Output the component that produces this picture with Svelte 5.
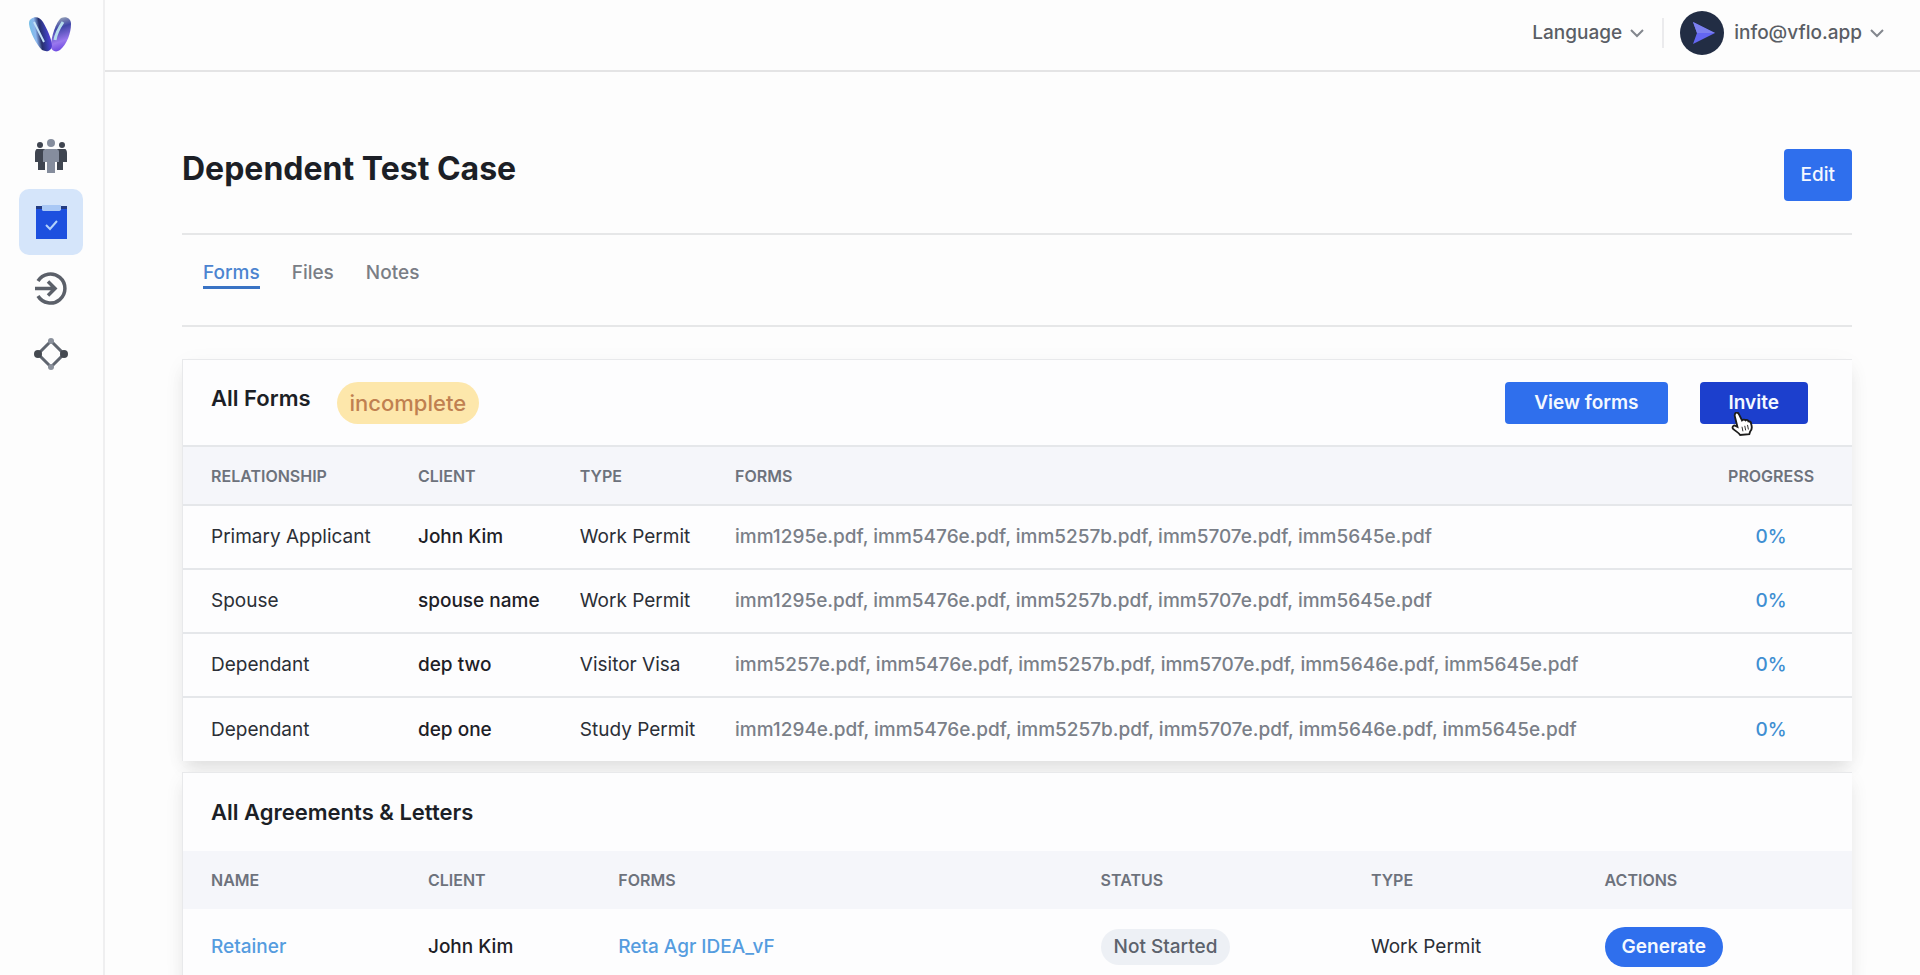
<script lang="ts">
	interface FormRow {
		relationship: string;
		client: string;
		type: string;
		forms: string[];
		progress: number;
	}

	interface Agreement {
		name: string;
		client: string;
		form: string;
		status: string;
		type: string;
	}

	const tabs = ['Forms', 'Files', 'Notes'];
	let activeTab = $state('Forms');

	const forms: FormRow[] = [
		{
			relationship: 'Primary Applicant',
			client: 'John Kim',
			type: 'Work Permit',
			forms: ['imm1295e.pdf', 'imm5476e.pdf', 'imm5257b.pdf', 'imm5707e.pdf', 'imm5645e.pdf'],
			progress: 0
		},
		{
			relationship: 'Spouse',
			client: 'spouse name',
			type: 'Work Permit',
			forms: ['imm1295e.pdf', 'imm5476e.pdf', 'imm5257b.pdf', 'imm5707e.pdf', 'imm5645e.pdf'],
			progress: 0
		},
		{
			relationship: 'Dependant',
			client: 'dep two',
			type: 'Visitor Visa',
			forms: ['imm5257e.pdf', 'imm5476e.pdf', 'imm5257b.pdf', 'imm5707e.pdf', 'imm5646e.pdf', 'imm5645e.pdf'],
			progress: 0
		},
		{
			relationship: 'Dependant',
			client: 'dep one',
			type: 'Study Permit',
			forms: ['imm1294e.pdf', 'imm5476e.pdf', 'imm5257b.pdf', 'imm5707e.pdf', 'imm5646e.pdf', 'imm5645e.pdf'],
			progress: 0
		}
	];

	const agreements: Agreement[] = [
		{
			name: 'Retainer',
			client: 'John Kim',
			form: 'Reta Agr IDEA_vF',
			status: 'Not Started',
			type: 'Work Permit'
		}
	];
</script>

{#snippet chevron()}
	<svg class="chevron" viewBox="0 0 14 10" aria-hidden="true">
		<path d="M1 2l6 6 6-6" fill="none" stroke="currentColor" stroke-width="2" />
	</svg>
{/snippet}

<div class="app">
	<aside class="sidebar">
		<a class="logo" href="#home" aria-label="Home">
			<svg viewBox="0 0 44 38">
				<defs>
					<linearGradient id="logo-left" x1="0" y1="0.6" x2="1" y2="0.4">
						<stop offset="0" stop-color="#6fc3e4" />
						<stop offset="0.3" stop-color="#8db7ee" />
						<stop offset="0.5" stop-color="#27306b" />
						<stop offset="0.75" stop-color="#3b3fb4" />
						<stop offset="1" stop-color="#6a3de8" />
					</linearGradient>
					<linearGradient id="logo-right" x1="0.4" y1="0" x2="0.6" y2="1">
						<stop offset="0" stop-color="#9aa9b8" />
						<stop offset="0.3" stop-color="#4046a8" />
						<stop offset="0.7" stop-color="#9a78ee" />
						<stop offset="1" stop-color="#6440de" />
					</linearGradient>
				</defs>
				<path d="M33 2c5-2 10 0 10 6 0 9-4 20-11 26-4 3-9 1-9-4 0-9 5-24 10-28z" fill="url(#logo-right)" />
				<path d="M3 3c4-3 9-2 12 3 4 7 9 17 9 24-1 6-6 6-10 4C8 28 2 16 1 8c0-2 0-4 2-5z" fill="url(#logo-left)" />
				<path d="M6 6c3 6 6 12 10 20" fill="none" stroke="#c3e3f7" stroke-width="2" />
				<path d="M35 6c-4 6-7 11-8 18" fill="none" stroke="#b5dcec" stroke-width="3" />
			</svg>
		</a>
		<nav class="side-nav">
			<a class="side-link" href="#clients" aria-label="Clients">
				<svg viewBox="0 0 34 34">
					<g fill="#3f4550">
						<circle cx="6" cy="6" r="3" />
						<circle cx="28" cy="6" r="3" />
						<path d="M3 10h8v21H4v-8H1v-9c0-2 1-4 2-4z" />
						<path d="M31 10h-8v21h6v-8h4v-9c0-2-1-4-2-4z" />
					</g>
					<g fill="#858d9d">
						<circle cx="17" cy="4" r="4" />
						<path d="M12 10h10c2 0 3 1 3 3v10h-4v11h-8V23H9V13c0-2 1-3 3-3z" />
					</g>
				</svg>
			</a>
			<a class="side-link active" href="#cases" aria-label="Cases" aria-current="page">
				<svg viewBox="0 0 34 34">
					<path d="M2 1h31v33H2z" fill="#1d50df" />
					<path d="M2 1h6v3H2zM27 1h6v3h-6z" fill="#233b82" />
					<path d="M8 0h19v5c-1 1-2 1-3 1H11c-1 0-3 0-3-1z" fill="#a9c8f5" />
					<path d="M12 20l4 4 7-8" fill="none" stroke="#b3d2fb" stroke-width="2" />
				</svg>
			</a>
			<a class="side-link" href="#intake" aria-label="Intake">
				<svg viewBox="0 0 34 34" fill="none" stroke="#5b6069" stroke-width="3.500">
					<path d="M4 10a14.500 14.500 0 1 1 0 15" />
					<path d="M1 17.500h20M14 10.500l7 7-7 7" />
				</svg>
			</a>
			<a class="side-link" href="#flows" aria-label="Flows">
				<svg viewBox="0 0 34 34">
					<path d="M17 4l13 13-13 13L4 17z" fill="none" stroke="#5f656f" stroke-width="3" />
					<circle cx="17" cy="4" r="3" fill="#8a909b" />
					<circle cx="17" cy="30" r="3" fill="#8a909b" />
					<circle cx="4" cy="17" r="4" fill="#444950" />
					<circle cx="30" cy="17" r="4" fill="#444950" />
				</svg>
			</a>
		</nav>
	</aside>

	<div class="page">
		<header class="topbar">
			<button class="menu" type="button">Language {@render chevron()}</button>
			<span class="divider"></span>
			<button class="menu account" type="button">
				<svg class="avatar" viewBox="0 0 44 44" aria-hidden="true">
					<circle cx="22" cy="22" r="22" fill="#222d44" />
					<path d="M13 11l22 11-22 11 4-11z" fill="#6366f1" />
					<path d="M13 11l22 11H17z" fill="#7c80ee" />
				</svg>
				<span>info@vflo.app</span>
				{@render chevron()}
			</button>
		</header>

		<main class="content">
			<div class="title-row">
				<h1>Dependent Test Case</h1>
				<button class="btn btn-edit" type="button">Edit</button>
			</div>

			<nav class="tabs">
				{#each tabs as tab (tab)}
					<a
						class="tab"
						class:active={activeTab === tab}
						href="#{tab.toLowerCase()}"
						onclick={() => (activeTab = tab)}>{tab}</a
					>
				{/each}
			</nav>

			<section class="card">
				<div class="card-head">
					<h2>All Forms</h2>
					<span class="badge warning">incomplete</span>
					<div class="card-actions">
						<button class="btn" type="button">View forms</button>
						<button class="btn btn-dark" type="button">
							Invite
							<svg class="pointer" viewBox="0 0 24 26" aria-hidden="true">
								<path
									d="M5 1c2-1 3 0 4 2l3 6c1-1 3-1 4 0 1-1 3 0 3 1 2 0 3 1 3 3 1 3 1 6-1 8l-1 3-10 1c-2-3-5-4-8-7-1-2 1-4 3-3l2 1L4 4c0-1 0-2 1-3z"
									fill="#fff"
									stroke="#1c1c1c"
									stroke-width="2"
								/>
								<path d="M12 16l1 5M15 15l1 5M18 14l1 5" stroke="#1c1c1c" stroke-width="1" />
							</svg>
						</button>
					</div>
				</div>
				<table class="forms-table">
					<colgroup>
						<col class="relationship" />
						<col class="client" />
						<col class="type" />
						<col />
						<col class="progress" />
					</colgroup>
					<thead>
						<tr>
							<th>Relationship</th>
							<th>Client</th>
							<th>Type</th>
							<th>Forms</th>
							<th class="center">Progress</th>
						</tr>
					</thead>
					<tbody>
						{#each forms as row}
							<tr>
								<td>{row.relationship}</td>
								<td class="strong">{row.client}</td>
								<td>{row.type}</td>
								<td class="muted">{row.forms.join(', ')}</td>
								<td class="center percent">{row.progress}%</td>
							</tr>
						{/each}
					</tbody>
				</table>
			</section>

			<section class="card">
				<div class="card-head compact">
					<h2>All Agreements &amp; Letters</h2>
				</div>
				<table class="agreements-table">
					<colgroup>
						<col class="name" />
						<col class="client" />
						<col class="form" />
						<col class="status" />
						<col class="type" />
						<col />
					</colgroup>
					<thead>
						<tr>
							<th>Name</th>
							<th>Client</th>
							<th>Forms</th>
							<th>Status</th>
							<th>Type</th>
							<th>Actions</th>
						</tr>
					</thead>
					<tbody>
						{#each agreements as item}
							<tr>
								<td><a class="link" href="#agreement">{item.name}</a></td>
								<td class="strong">{item.client}</td>
								<td><a class="link" href="#form">{item.form}</a></td>
								<td><span class="badge">{item.status}</span></td>
								<td>{item.type}</td>
								<td><button class="btn btn-round" type="button">Generate</button></td>
							</tr>
						{/each}
					</tbody>
				</table>
			</section>
		</main>
	</div>
</div>

<style>
	:global(body) {
		background: #fdfdfd;
	}

	.app {
		display: flex;
		height: 100vh;
		overflow: hidden;
		font-family: Inter, 'Liberation Sans', sans-serif;
		font-size: 19px;
		line-height: 24px;
		color: #2b2f36;
	}

	.sidebar {
		box-sizing: border-box;
		width: 105px;
		flex-shrink: 0;
		padding: 16px 19px;
		border-right: 2px solid #efeff0;
	}

	.logo {
		display: block;
		width: 44px;
		height: 38px;
		margin: 0 9px 69px;
	}

	.logo svg {
		display: block;
	}

	.side-nav {
		display: flex;
		flex-direction: column;
	}

	.side-link {
		display: flex;
		align-items: center;
		justify-content: center;
		width: 64px;
		height: 66px;
		border-radius: 10px;
	}

	.side-link.active {
		background: #d5e5fa;
	}

	.side-link svg {
		width: 34px;
		height: 34px;
	}

	.page {
		flex: 1;
		min-width: 0;
	}

	.topbar {
		box-sizing: border-box;
		display: flex;
		align-items: center;
		justify-content: flex-end;
		height: 72px;
		padding: 0 36px 4px 0;
		border-bottom: 2px solid #e4e4e5;
	}

	.menu {
		display: flex;
		align-items: center;
		gap: 8px;
		padding: 0;
		border: 0;
		background: none;
		font: inherit;
		font-weight: 500;
		color: #5a5e65;
		cursor: pointer;
	}

	.chevron {
		width: 14px;
		height: 10px;
		color: #83878e;
	}

	.divider {
		width: 2px;
		height: 30px;
		margin: 0 16px 0 18px;
		background: #ebebed;
	}

	.avatar {
		width: 44px;
		height: 44px;
		margin-right: 2px;
	}

	.content {
		padding: 48px 68px 0 77px;
	}

	.title-row {
		display: flex;
		justify-content: space-between;
		align-items: flex-start;
		padding: 29px 0 32px;
		border-bottom: 2px solid #e6e7e8;
	}

	h1,
	h2 {
		margin: 0;
		color: #1c1f26;
	}

	h1 {
		font-size: 32px;
		font-weight: 700;
		line-height: 40px;
	}

	h2 {
		font-size: 22px;
		font-weight: 600;
		line-height: 32px;
	}

	.btn {
		position: relative;
		padding: 9px 29px;
		border: 0;
		border-radius: 4px;
		background: #2f6fed;
		font: inherit;
		font-weight: 600;
		color: #f4f8ff;
		cursor: pointer;
	}

	.btn-edit {
		padding: 14px 17px;
		font-weight: 500;
	}

	.btn-dark {
		background: #1c3fcd;
	}

	.btn-round {
		padding: 8px 17px;
		border-radius: 20px;
	}

	.pointer {
		position: absolute;
		top: 30px;
		left: 31px;
		width: 22px;
		height: 24px;
	}

	.tabs {
		display: flex;
		gap: 32px;
		padding: 26px 21px 36px;
		margin-bottom: 32px;
		border-bottom: 2px solid #e6e7e8;
	}

	.tab {
		padding-bottom: 1px;
		border-bottom: 3px solid transparent;
		font-weight: 500;
		color: #7a7e85;
		text-decoration: none;
	}

	.tab.active {
		border-color: #3973c4;
		color: #4c84d0;
	}

	.card {
		margin-bottom: 11px;
		border: 1px solid #e8e9eb;
		border-right: 0;
		border-bottom: 0;
		background: #fdfdfe;
		box-shadow:
			0 10px 16px -3px rgba(0, 0, 0, 0.1),
			0 4px 24px rgba(0, 0, 0, 0.03);
	}

	.card-head {
		display: flex;
		align-items: flex-start;
		gap: 26px;
		padding: 22px 44px 21px 28px;
	}

	.card-head.compact {
		padding: 23px 28px;
	}

	.card-actions {
		display: flex;
		gap: 32px;
		margin-left: auto;
	}

	.badge {
		display: inline-block;
		padding: 6px 13px;
		border-radius: 21px;
		background: #edf0f5;
		font-weight: 500;
		color: #5c626c;
	}

	.badge.warning {
		padding: 9px 13px;
		background: #fde7ab;
		font-size: 22px;
		color: #c08050;
	}

	table {
		width: 100%;
		table-layout: fixed;
		border-collapse: collapse;
	}

	th,
	td {
		box-sizing: border-box;
		padding: 0 0 0 28px;
		text-align: left;
		white-space: nowrap;
	}

	th {
		height: 58px;
		background: #f5f6fa;
		font-size: 16px;
		font-weight: 600;
		text-transform: uppercase;
		color: #6d727c;
	}

	td {
		height: 64px;
	}

	.center {
		padding: 0;
		text-align: center;
	}

	.forms-table tr {
		border-top: 2px solid #e5e7ea;
	}

	.forms-table th {
		height: 59px;
	}

	.forms-table .relationship {
		width: 12.4%;
	}

	.forms-table .client,
	.forms-table .progress {
		width: 9.7%;
	}

	.forms-table .type {
		width: 9.3%;
	}

	.agreements-table .name {
		width: 13%;
	}

	.agreements-table .client {
		width: 11.4%;
	}

	.agreements-table .form {
		width: 28.9%;
	}

	.agreements-table .status {
		width: 16.2%;
	}

	.agreements-table .type {
		width: 14%;
	}

	.agreements-table td {
		height: 76px;
	}

	.strong {
		font-weight: 500;
		color: #1d2026;
	}

	.muted {
		font-weight: 500;
		color: #7a7f88;
	}

	.percent {
		font-weight: 500;
		color: #3f8fd2;
	}

	.link {
		font-weight: 500;
		color: #559cdf;
		text-decoration: none;
	}
</style>
